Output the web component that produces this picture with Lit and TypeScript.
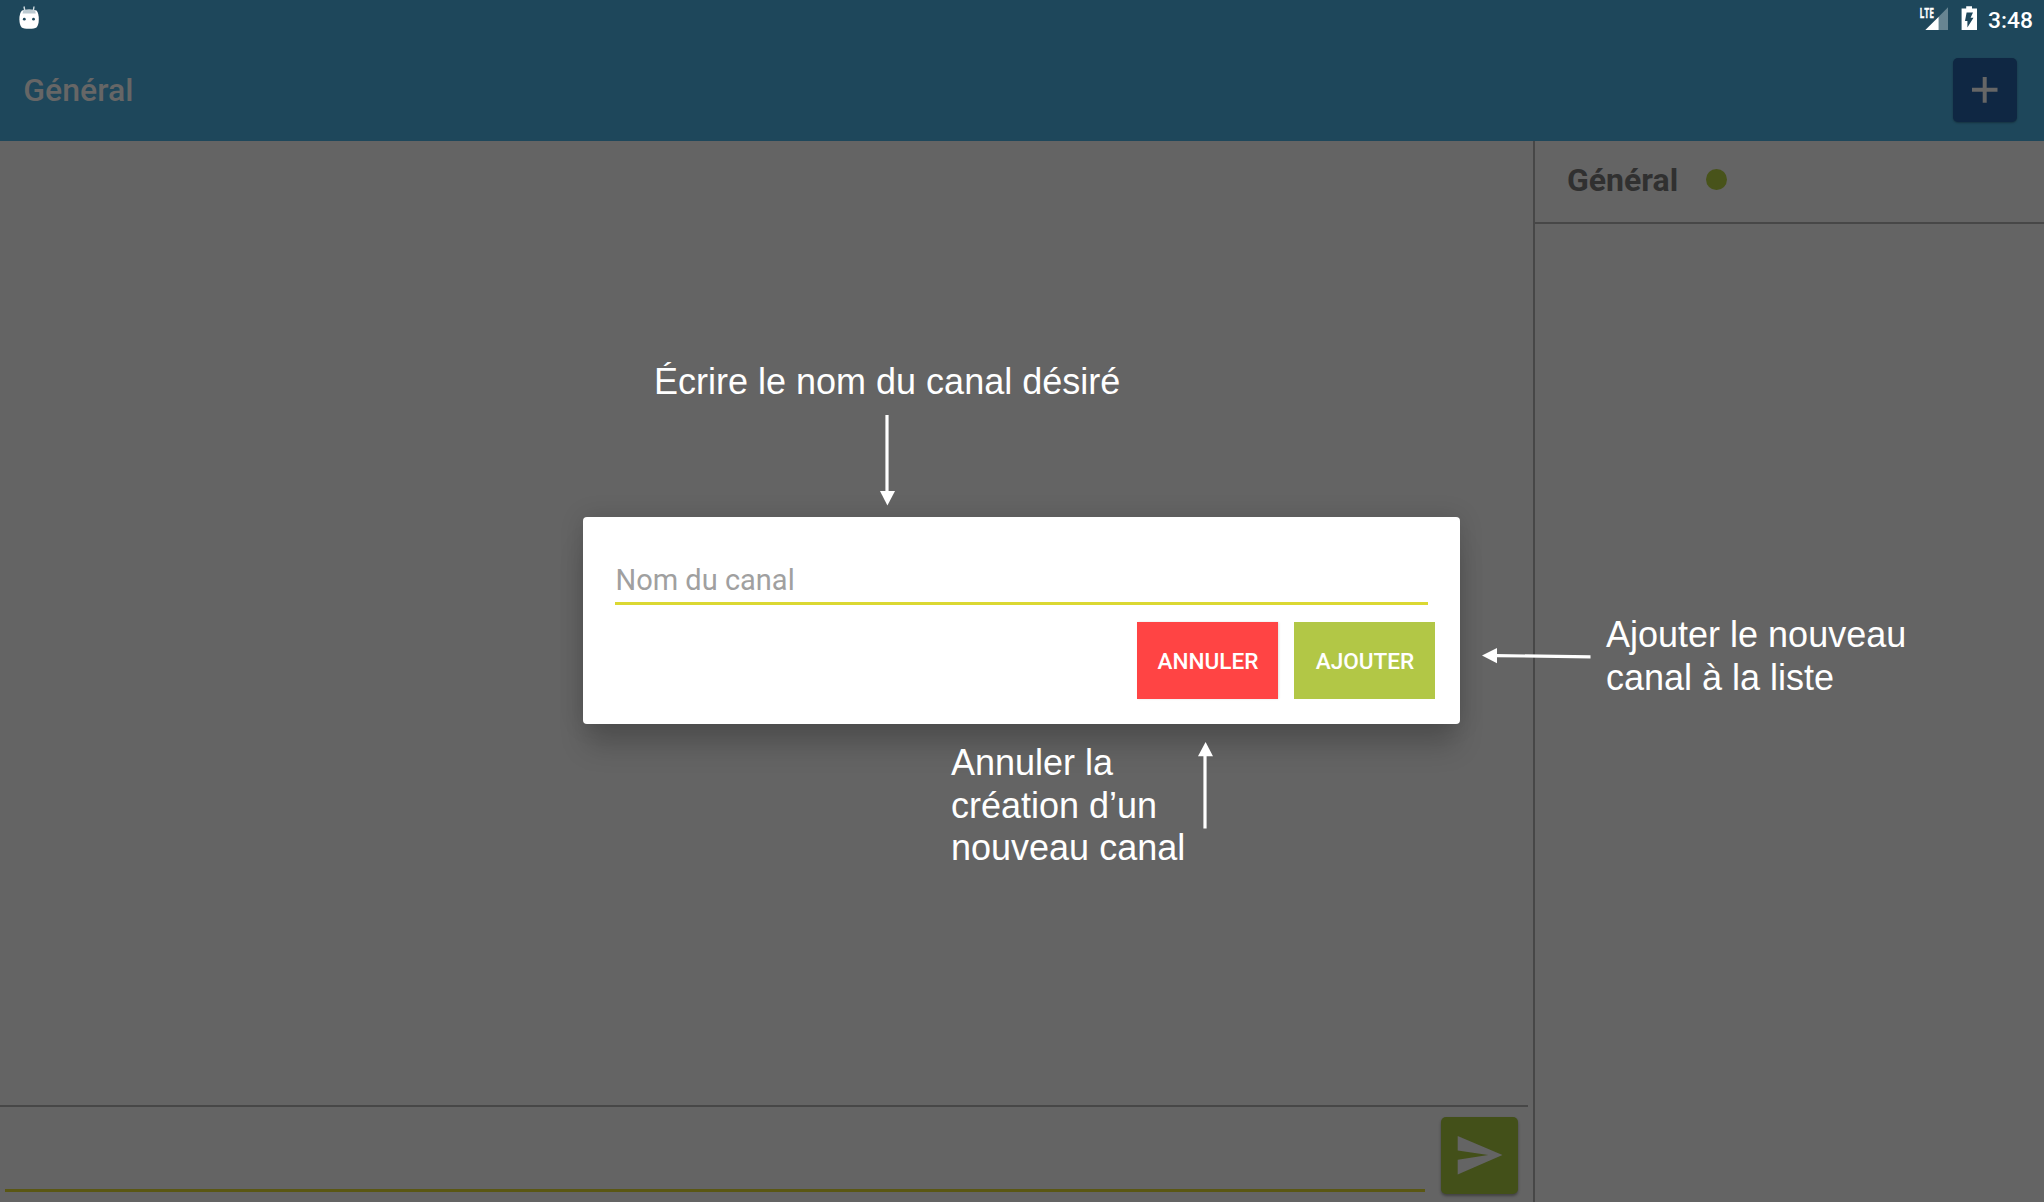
import { LitElement, html, css, svg } from "lit";
import { customElement, property } from "lit/decorators.js";

@customElement("status-bar")
class StatusBar extends LitElement {
  static styles = css`
    :host { display: flex; height: 36px; justify-content: space-between; }
    .icon { display: block; }
    .right { display: flex; }
    .time { font: 500 22.8px/36px Roboto, sans-serif; color: #fff; padding: 3px 11px 0 11px; width: 45px; white-space: nowrap; box-sizing: content-box; }
    .lte { font: 700 14px "Open Sans", Roboto, sans-serif; }
  `;
  render() {
    return html`
      <svg class="icon" width="60" height="36" viewBox="0 0 60 36">
        <path d="M24 6.5L25 12M34 6.5L33.2 12" stroke="#d3dce0" stroke-width="1.4" />
        <path d="M22 10.5Q29 8.4 36.5 10.5Q38.8 13 38.8 19.5Q38.8 25 36.5 27.4Q34.5 28.8 29.2 28.8Q23.5 28.8 21.7 27.4Q19.4 25 19.4 19.5Q19.4 13 22 10.5Z" fill="#fff" />
        <path d="M23.3 10.3Q29 9 35 10.3L35.8 13.5H22.5Z" fill="#bccad1" />
        <circle cx="24.3" cy="19.2" r="1.4" fill="#1e475b" />
        <circle cx="33.5" cy="19.2" r="1.4" fill="#1e475b" />
      </svg>
      <div class="right">
        <svg class="icon" width="67" height="36" viewBox="1910 0 67 36">
          <text class="lte" x="1919.5" y="18" fill="#fff" stroke="#fff" stroke-width=".3" textLength="14.5" lengthAdjust="spacingAndGlyphs">LTE</text>
          <path d="M1938.7 16.8L1948 7.3V30H1938.7Z" fill="#688592" />
          <path d="M1925.3 30L1938.7 16.8V30Z" fill="#fff" />
          <path d="M1966.2 6.3h5.8v2.2h5v21.4h-15.4V8.5h4.6Z" fill="#fff" />
          <path d="M1966.6 12.6H1973L1970.6 17.8H1973.5L1967.4 27.4V21H1965Z" fill="#1e475b" />
        </svg>
        <span class="time">3:48</span>
      </div>
    `;
  }
}

@customElement("channel-dialog")
class ChannelDialog extends LitElement {
  static styles = css`
    :host {
      display: block; box-sizing: border-box; width: 877px; height: 207px; padding: 0 25px 0 32px;
      border-radius: 4px; background: #fff; font-family: Roboto, sans-serif;
      box-shadow: 0 26px 26px -4px rgba(0,0,0,.18), 0 0 24px rgba(0,0,0,.14);
    }
    .field { box-sizing: border-box; width: 813px; height: 88px; border-bottom: 3px solid #dbd832; padding: 46px 0 0 0.5px; font-size: 29px; line-height: 34px; color: #a0a0a0; }
    .actions { display: flex; justify-content: flex-end; gap: 16px; padding-top: 17px; }
    .btn { width: 141px; height: 77px; display: flex; align-items: center; justify-content: center; color: #fff; font-size: 22.6px; font-weight: 500; padding: 2px 0 0 1px; box-sizing: border-box; }
    .cancel { background: #ff4444; box-shadow: 1px 0 2px rgba(0,0,0,.12); }
    .add { background: #b2c746; }
  `;
  render() {
    return html`
      <div class="field">Nom du canal</div>
      <div class="actions">
        <div class="btn cancel">ANNULER</div>
        <div class="btn add">AJOUTER</div>
      </div>
    `;
  }
}

@customElement("app-root")
class AppRoot extends LitElement {
  @property() channel = "Général";

  static styles = css`
    :host { display: block; position: relative; width: 2044px; height: 1202px; overflow: hidden; background: #646464; font-family: Roboto, sans-serif; }
    .page { display: flex; flex-direction: column; height: 100%; }
    .header { height: 141px; background: #1e475b; flex: none; }
    .toolbar { display: flex; align-items: center; justify-content: space-between; height: 105px; padding: 0 27.5px 0 23.3px; box-sizing: border-box; }
    .title { font-size: 32px; font-weight: 500; color: #666; line-height: 40px; padding-top: 3px; }
    .plus { width: 64px; height: 64px; border-radius: 5px; background: #0f2743; display: block; box-shadow: 0 1px 2px rgba(0,0,0,.3); margin-top: 2px; }
    .body { display: flex; flex: 1; min-height: 0; }
    .chat { width: 1533px; display: flex; flex-direction: column; }
    .messages { flex: 1; }
    .composer { display: flex; width: 1527.5px; height: 97px; box-sizing: border-box; border-top: 2px solid #474747; padding: 10px 9.5px 0 4.5px; justify-content: space-between; }
    .entry { width: 1420.5px; height: 75px; box-sizing: border-box; border-bottom: 3px solid #5a5713; }
    .send { width: 77px; height: 77px; border-radius: 5px; background: #435019; display: block; box-shadow: 0 2px 3px rgba(0,0,0,.35); }
    .side { flex: 1; border-left: 2px solid #474747; }
    .row { display: flex; align-items: center; gap: 28px; height: 83px; box-sizing: border-box; border-bottom: 2px solid #474747; padding: 0 0 4px 32px; }
    .name { font-size: 32px; font-weight: 700; color: #303030; line-height: 40px; padding-top: 1px; }
    .dot { width: 21px; height: 21px; border-radius: 50%; background: #48531a; margin-top: -1px; }
    .dialog { position: absolute; left: 583px; top: 517px; }
    .note { position: absolute; color: #fff; font: 36px/42.6px "Liberation Sans", Arial, sans-serif; white-space: pre; }
    .write { left: 654px; top: 360.5px; }
    .confirm { left: 1606px; top: 614px; }
    .abort { left: 951px; top: 742px; }
    .arrows { position: absolute; inset: 0; }
  `;

  render() {
    return html`
      <div class="page">
        <div class="header">
          <status-bar></status-bar>
          <div class="toolbar">
            <div class="title">${this.channel}</div>
            <svg class="plus" viewBox="0 0 64 64"><path d="M19 31.7H44.5M31.7 18.9V44.7" stroke="#666" stroke-width="4" /></svg>
          </div>
        </div>
        <div class="body">
          <div class="chat">
            <div class="messages"></div>
            <div class="composer">
              <div class="entry"></div>
              <svg class="send" viewBox="0 0 77 77"><path d="M16.7 19L61.5 38L16.7 57.5V42.8L47.2 38L16.7 33.6Z" fill="#646464" /></svg>
            </div>
          </div>
          <div class="side">
            <div class="row"><span class="name">${this.channel}</span><span class="dot"></span></div>
          </div>
        </div>
      </div>
      <channel-dialog class="dialog"></channel-dialog>
      <div class="note write">Écrire le nom du canal désiré</div>
      <div class="note confirm">Ajouter le nouveau<br>canal à la liste</div>
      <div class="note abort">Annuler la<br>création d’un<br>nouveau canal</div>
      <svg class="arrows" width="2044" height="1202" viewBox="0 0 2044 1202">
        ${[
          ["M887 415V492", "M880 491H895L887.4 505.5Z"],
          ["M1205 828.5V755", "M1198 756.3H1213L1205.6 742Z"],
          ["M1590.5 656.8L1496 655.6", "M1497 648V663.3L1482 655.6Z"],
        ].map(([line, head]) => svg`<path d=${line} stroke="#fff" stroke-width="3.2" /><path d=${head} fill="#fff" />`)}
      </svg>
    `;
  }
}
